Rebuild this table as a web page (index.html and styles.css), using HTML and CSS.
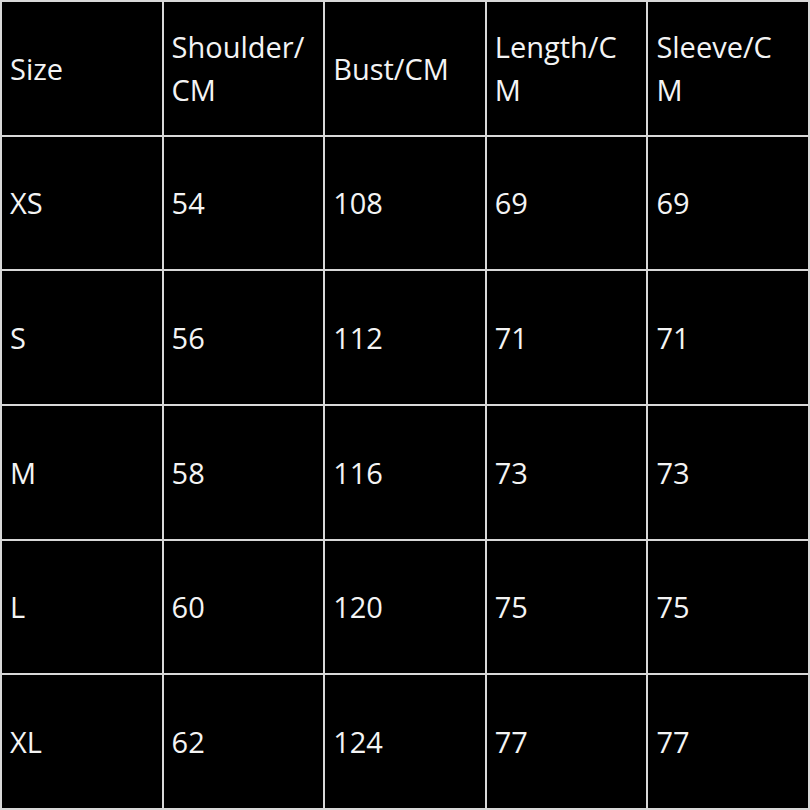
FILE: index.html
```html
<!DOCTYPE html>
<html>
<head>
<meta charset="utf-8">
<link rel="stylesheet" href="styles.css">
</head>
<body>
<table class="size-table">
  <tr><td>Size</td><td>Shoulder/CM</td><td>Bust/CM</td><td>Length/CM</td><td>Sleeve/CM</td></tr>
  <tr><td>XS</td><td>54</td><td>108</td><td>69</td><td>69</td></tr>
  <tr><td>S</td><td>56</td><td>112</td><td>71</td><td>71</td></tr>
  <tr><td>M</td><td>58</td><td>116</td><td>73</td><td>73</td></tr>
  <tr><td>L</td><td>60</td><td>120</td><td>75</td><td>75</td></tr>
  <tr><td>XL</td><td>62</td><td>124</td><td>77</td><td>77</td></tr>
</table>
</body>
</html>
```
FILE: styles.css
```css
html, body {
  margin: 0;
  padding: 0;
  background: #000;
}
.size-table {
  width: 810px;
  height: 810px;
  border-collapse: collapse;
  table-layout: fixed;
  background: #000;
  color: #f4f4f4;
  font-family: "Open Sans", sans-serif;
  font-size: 29px;
  line-height: 43px;
}
.size-table td {
  border: 2px solid #d8d8d8;
  padding: 0 12px 0 8px;
  height: 131px;
  vertical-align: middle;
  word-break: break-all;
  text-align: left;
}
```
